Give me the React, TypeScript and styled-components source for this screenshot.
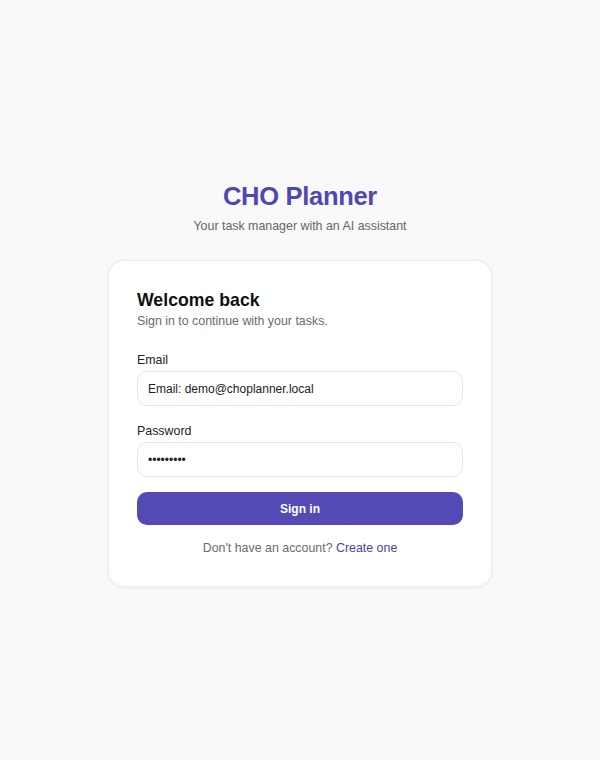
import styled, { createGlobalStyle } from "styled-components";

const GlobalStyle = createGlobalStyle`
  html, body {
    margin: 0;
    padding: 0;
    background: #f9f9f9;
    font-family: "Liberation Sans", Arial, sans-serif;
  }
  * { box-sizing: border-box; }
`

const Page = styled.div`
  min-height: 760px;
  display: flex;
  flex-direction: column;
  align-items: center;
  padding-top: 180px;
`

const Brand = styled.h1`
  margin: 0;
  font-size: 25.5px;
  font-weight: 700;
  color: #5048b2;
  letter-spacing: -0.3px;
  line-height: 32px;
`

const Tagline = styled.p`
  margin: 6px 0 0;
  font-size: 12.4px;
  color: #666;
  line-height: 16px;
`

const Card = styled.div`
  margin-top: 26px;
  width: 384px;
  background: #fff;
  border: 1px solid #ececec;
  border-radius: 16px;
  box-shadow: 0 1px 4px rgba(0, 0, 0, 0.06);
  padding: 28px 28px 30px;
`

const CardTitle = styled.h2`
  margin: 0;
  font-size: 17.7px;
  font-weight: 700;
  color: #111;
  line-height: 22px;
`

const CardSub = styled.p`
  margin: 2px 0 0;
  font-size: 12.4px;
  color: #6b6b6b;
  line-height: 16px;
`

const Form = styled.form`
  margin-top: 23px;
  display: flex;
  flex-direction: column;
`

const Field = styled.div`
  display: flex;
  flex-direction: column;
  margin-bottom: 17px;
`

const Label = styled.label`
  font-size: 12.4px;
  color: #222;
  line-height: 16px;
  margin-bottom: 3px;
`

const Input = styled.input`
  height: 35px;
  border: 1px solid #e6e6e6;
  border-radius: 10px;
  padding: 0 10px;
  font-family: inherit;
  font-size: 12px;
  color: #222;
  background: #fff;
  outline: none;
`

const Button = styled.button`
  height: 33px;
  margin-top: -2px;
  border: none;
  border-radius: 10px;
  background: #534ab6;
  color: #fff;
  font-family: inherit;
  font-size: 12px;
  font-weight: 700;
  cursor: pointer;
`

const Footer = styled.p`
  margin: 15px 0 0;
  text-align: center;
  font-size: 12.4px;
  color: #6b6b6b;
  line-height: 16px;
`

const Link = styled.a`
  color: #4a42a8;
  text-decoration: none;
`

const App = () => {
  return (
    <>
      <GlobalStyle />
      <Page>
        <Brand>CHO Planner</Brand>
        <Tagline>Your task manager with an AI assistant</Tagline>
        <Card>
          <CardTitle>Welcome back</CardTitle>
          <CardSub>Sign in to continue with your tasks.</CardSub>
          <Form onSubmit={e => e.preventDefault()}>
            <Field>
              <Label>Email</Label>
              <Input type="text" defaultValue="Email: demo@choplanner.local" />
            </Field>
            <Field>
              <Label>Password</Label>
              <Input type="password" defaultValue="password1" />
            </Field>
            <Button type="submit">Sign in</Button>
          </Form>
          <Footer>
            Don't have an account? <Link href="#">Create one</Link>
          </Footer>
        </Card>
      </Page>
    </>
  );
};

export default App;
